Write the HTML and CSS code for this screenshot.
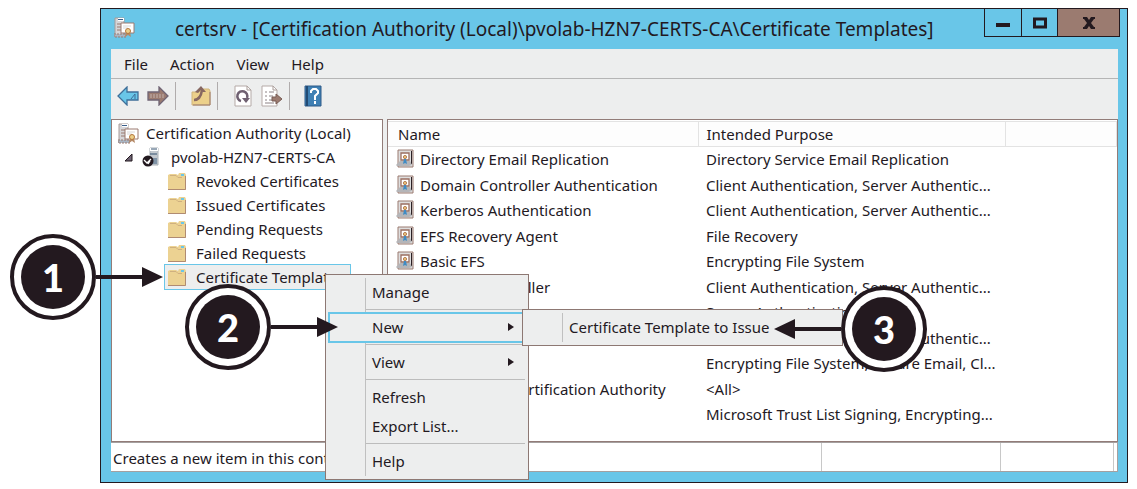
FILE: index.html
```
<!DOCTYPE html>
<html lang="en">
<head>
<meta charset="utf-8">
<title>certsrv</title>
<link rel="stylesheet" href="styles.css">
</head>
<body>
<svg width="0" height="0" class="defs" aria-hidden="true">
  <symbol id="ca" viewBox="0 0 21 21">
    <path d="M1 1h9v17H1z" fill="#d5d5d8" stroke="#a79c9a"/>
    <path d="M4 1h6v3H4z" fill="#fff"/>
    <path d="M4 2h5v1H4z" fill="#3a5f8c"/>
    <path d="M3 7h5M3 10h4M3 13h4" stroke="#9b7b70"/>
    <path d="M0 17h12v3H0z" fill="#a9b6c4" stroke="#9b7b70" stroke-dasharray="2 1"/>
    <path d="M7 6h13v10H7z" fill="#fff" stroke="#9b7b70"/>
    <path d="M9 9h8M9 11h5" stroke="#d8d8d8"/>
    <path d="M12 15l-1 5 3-2 3 2-1-5z" fill="#b58a68"/>
    <circle cx="14" cy="14" r="2.500" fill="#ecd08a" stroke="#b5763c"/>
  </symbol>
  <symbol id="server" viewBox="0 0 18 20">
    <path d="M8 1h8v17H8z" fill="#c3c9cf" stroke="#a9b0b6"/>
    <path d="M8 1h8v3H8z" fill="#fff"/>
    <path d="M9 2h6M8 7h7" stroke="#33506e"/>
    <path d="M10 11h5v6h-5z" fill="#7f93a6"/>
    <circle cx="6" cy="14" r="5.500" fill="#23191f"/>
    <path d="M2 13l3 3 4-4M6 17l2-3" fill="none" stroke="#fff" stroke-width="1.300"/>
  </symbol>
  <symbol id="folder" viewBox="0 0 20 19">
    <path d="M1 3l2-1h6l2 1 1-2h6l1 2v15H1z" fill="#ecd292"/>
    <path d="M3 3.500h6l2 2h4" fill="none" stroke="#cfb07f"/>
    <path d="M14 2h3v2h-3z" fill="#6ac6e8"/>
    <path d="M1 17.500h17.500V4" fill="none" stroke="#b08b72"/>
  </symbol>
  <symbol id="cert" viewBox="0 0 18 19">
    <path d="M2 1h15v17H2z" fill="#dedede" stroke="#9b7b70"/>
    <path d="M5 4h8v7H5z" fill="#fff" stroke="#9b6f62" stroke-width="1.300"/>
    <path d="M15.500 2v13" stroke="#2b2025"/>
    <path d="M0 16l4-4h10l2 4-3 1H1z" fill="#b5b5b8"/>
    <path d="M8 10l-1 5 2-1 2 1-1-5z" fill="#3f8bc4"/>
    <circle cx="9" cy="8" r="1.600" fill="#ecc77c" stroke="#a4643c" stroke-width=".8"/>
  </symbol>
</svg>

<main class="window">
  <header class="titlebar">
    <svg class="app-icon"><use href="#ca"/></svg>
    <h1 class="title">certsrv - [Certification Authority (Local)\pvolab-HZN7-CERTS-CA\Certificate Templates]</h1>
    <div class="controls">
      <button class="control minimize" aria-label="Minimize"><svg width="14" height="14"><path d="M0 9h14" stroke="#23191f" stroke-width="4"/></svg></button>
      <button class="control maximize" aria-label="Maximize"><svg width="14" height="14"><path d="M1.500 3h11v8h-11z" fill="none" stroke="#23191f" stroke-width="3"/></svg></button>
      <button class="control close" aria-label="Close"><svg width="14" height="14"><path d="M1 1h4l2 3 2-3h4v2h-1l-3 4 3 4h1v2H9L7 10l-2 3H1v-2h1l3-4-3-4H1z" fill="#23191f"/></svg></button>
    </div>
  </header>
  <div class="client">
    <nav class="menubar">
      <button>File</button><button>Action</button><button>View</button><button>Help</button>
    </nav>
    <div class="toolbar">
      <button aria-label="Back"><svg width="22" height="20" viewBox="0 0 22 20"><path d="M1 10l9-9v5h11v8H10v5z" fill="#69c6e8" stroke="#3f6f99" stroke-width="1.300"/><path d="M14 13l4-5v5" stroke="#3f6f99" fill="none"/></svg></button>
      <button aria-label="Forward"><svg width="22" height="20" viewBox="0 0 22 20"><path d="M21 10l-9-9v5H1v8h11v5z" fill="#9b7b70" stroke="#6f6474" stroke-width="1.300"/><path d="M3 9h14M3 11h14" stroke="#c3b3ad" stroke-dasharray="2 1"/></svg></button>
      <span class="divider"></span>
      <button class="up" aria-label="Up one level"><svg width="20" height="20" viewBox="0 0 20 20"><path d="M1 6h5l2-3h10l1 2v14H1z" fill="#ecd08a" stroke="#d0b47c"/><path d="M19 6v13H2" fill="none" stroke="#9b7b70"/><path d="M3 14c4 0 7-3 8-10" fill="none" stroke="#876861" stroke-width="2.500"/><path d="M4 6l6-6 5 6h-3l-2-2-3 3z" fill="#876861"/></svg></button>
      <span class="divider"></span>
      <button class="refresh" aria-label="Refresh"><svg width="20" height="22" viewBox="0 0 20 22"><path d="M2 1h12l4 4v16H2z" fill="#fff" stroke="#b5aaa7"/><path d="M14 1v4h4" fill="none" stroke="#a99c98"/><path d="M8 16a5 5 0 1 1 6-3" fill="none" stroke="#6f6071" stroke-width="2.500"/><path d="M9 13h8l-4 5z" fill="#6f6071"/></svg></button>
      <button aria-label="Export list"><svg width="22" height="22" viewBox="0 0 22 22"><path d="M1 1h11l4 4v16H1z" fill="#fff" stroke="#b5aaa7"/><path d="M12 1v4h4" fill="none" stroke="#a99c98"/><path d="M4 7h2m2 0h5M4 11h2m2 0h4M4 15h2m2 0h5M4 18h9" stroke="#8c8285"/><path d="M11 12h4V9l6 5-6 5v-3h-4z" fill="#9b7b70" stroke="#795d55"/></svg></button>
      <span class="divider"></span>
      <button class="help" aria-label="Help"><svg width="18" height="22" viewBox="0 0 18 22"><path d="M1 1h16v20H1z" fill="#3f80b4" stroke="#2f5b88"/><path d="M3 1v20" stroke="#234b74" stroke-width="2"/><path d="M7 8V6l2-2h3l2 2v2l-3 3v4M11 16v3" fill="none" stroke="#fff" stroke-width="2"/></svg></button>
    </div>
    <div class="panes">
      <ul class="tree">
        <li class="root"><svg class="ca-icon"><use href="#ca"/></svg>Certification Authority (Local)</li>
        <li class="host"><svg class="expander" width="10" height="10"><path d="M1 9L8 2v7z" fill="#6f6474" stroke="#23191f"/></svg><svg class="server-icon"><use href="#server"/></svg>pvolab-HZN7-CERTS-CA</li>
        <li class="leaf"><svg class="folder"><use href="#folder"/></svg>Revoked Certificates</li>
        <li class="leaf"><svg class="folder"><use href="#folder"/></svg>Issued Certificates</li>
        <li class="leaf"><svg class="folder"><use href="#folder"/></svg>Pending Requests</li>
        <li class="leaf"><svg class="folder"><use href="#folder"/></svg>Failed Requests</li>
        <li class="leaf selected"><svg class="folder"><use href="#folder"/></svg>Certificate Templates</li>
      </ul>
      <div class="list">
        <table>
          <thead><tr><th class="name">Name</th><th class="purpose">Intended Purpose</th><th></th></tr></thead>
          <tbody>
            <tr><td><svg class="cert"><use href="#cert"/></svg>Directory Email Replication</td><td>Directory Service Email Replication</td><td></td></tr>
            <tr><td><svg class="cert"><use href="#cert"/></svg>Domain Controller Authentication</td><td>Client Authentication, Server Authentic...</td><td></td></tr>
            <tr><td><svg class="cert"><use href="#cert"/></svg>Kerberos Authentication</td><td>Client Authentication, Server Authentic...</td><td></td></tr>
            <tr><td><svg class="cert"><use href="#cert"/></svg>EFS Recovery Agent</td><td>File Recovery</td><td></td></tr>
            <tr><td><svg class="cert"><use href="#cert"/></svg>Basic EFS</td><td>Encrypting File System</td><td></td></tr>
            <tr><td><svg class="cert"><use href="#cert"/></svg>Domain Controller</td><td>Client Authentication, Server Authentic...</td><td></td></tr>
            <tr><td><svg class="cert"><use href="#cert"/></svg>Web Server</td><td>Server Authentication</td><td></td></tr>
            <tr><td><svg class="cert"><use href="#cert"/></svg>Computer</td><td>Client Authentication, Server Authentic...</td><td></td></tr>
            <tr><td><svg class="cert"><use href="#cert"/></svg>User</td><td>Encrypting File System, Secure Email, Cl...</td><td></td></tr>
            <tr><td><svg class="cert"><use href="#cert"/></svg>Subordinate Certification Authority</td><td>&lt;All&gt;</td><td></td></tr>
            <tr><td><svg class="cert"><use href="#cert"/></svg>Administrator</td><td>Microsoft Trust List Signing, Encrypting...</td><td></td></tr>
          </tbody>
        </table>
      </div>
    </div>
    <footer class="status">
      <span class="message">Creates a new item in this container.</span>
      <span class="cell wide"></span>
      <span class="cell"></span>
    </footer>
  </div>
</main>

<div class="menu context">
  <button>Manage</button>
  <hr>
  <button class="active">New<svg class="more" width="6" height="8"><path d="M0 0l6 4-6 4z" fill="#23191f"/></svg></button>
  <hr>
  <button>View<svg class="more" width="6" height="8"><path d="M0 0l6 4-6 4z" fill="#23191f"/></svg></button>
  <hr>
  <button>Refresh</button>
  <button>Export List...</button>
  <hr>
  <button>Help</button>
</div>
<div class="menu submenu">
  <button>Certificate Template to Issue</button>
</div>

<div class="callout one"><span class="badge"><b>1</b></span><svg width="67" height="20"><path d="M0 8h46V0l21 10-21 10v-8H0z" fill="#23191f"/></svg></div>
<div class="callout two"><span class="badge"><b>2</b></span><svg width="67" height="20"><path d="M0 8h46V0l21 10-21 10v-8H0z" fill="#23191f"/></svg></div>
<div class="callout three"><svg width="67" height="20"><path d="M67 8H21V0L0 10l21 10v-8h46z" fill="#23191f"/></svg><span class="badge"><b>3</b></span></div>
</body>
</html>
```
FILE: styles.css
```
* { box-sizing: border-box; }

body {
  position: relative;
  display: flex;
  min-height: 100vh;
  margin: 0;
  padding: 8px 9px 6px 100px;
  background: #fff;
  color: #23191f;
  font: 15px/22px "Noto Sans", "Open Sans", sans-serif;
}

button {
  margin: 0;
  padding: 0;
  border: 0;
  background: none;
  color: inherit;
  font: inherit;
}

svg { flex: none; display: block; }
.defs { position: absolute; }

/* Window frame */
.window {
  flex: 1;
  display: flex;
  flex-direction: column;
  min-width: 0;
  padding: 0 9px 10px 10px;
  border: 1px solid #23191f;
  background: #69c6e8;
}

.titlebar {
  display: flex;
  align-items: flex-start;
  height: 40px;
}

.app-icon { width: 21px; height: 21px; margin: 8px 0 0 3px; }

.title {
  flex: 1;
  margin: 0;
  padding-left: 40px;
  font-size: 19px;
  font-weight: 400;
  line-height: 40px;
  white-space: nowrap;
}

.controls {
  display: flex;
  margin-right: -2px;
  border: 1px solid #23191f;
  border-top: 0;
}

.control {
  display: grid;
  place-items: center;
  width: 36px;
  height: 27px;
  border-left: 1px solid #23191f;
}
.control.minimize { border-left: 0; }
.control.close { width: 62px; background: #9b7b70; }

.client {
  flex: 1;
  display: flex;
  flex-direction: column;
  background: #edeeee;
}

.menubar {
  display: flex;
  gap: 22px;
  height: 30px;
  padding-left: 13px;
  border-bottom: 1px solid #b5b5b5;
}

.toolbar {
  display: flex;
  align-items: center;
  gap: 8px;
  height: 40px;
  padding: 0 6px 6px;
}

.divider { width: 1px; height: 28px; background: #b0acac; }
.toolbar .divider { margin-left: -2px; }
.toolbar .up { margin: 0 0 0 7px; }
.toolbar .refresh { margin-left: 7px; }
.toolbar .help { margin-left: 6px; }

.panes {
  flex: 1;
  display: flex;
  gap: 4px;
}

.tree, .list {
  border: 1px solid #927c78;
  background: #fff;
}

.tree {
  width: 272px;
  margin: 0;
  padding: 1px 0 0;
  list-style: none;
  white-space: nowrap;
}
.tree li { display: flex; align-items: center; height: 24px; }
.root { gap: 7px; padding-left: 6px; }
.host { padding-left: 12px; }
.leaf { gap: 9px; padding-left: 2px; margin: 0 32px 0 53px; }
.selected { overflow: hidden; background: #edeeee; outline: 1px solid #69c6e8; }
.ca-icon { width: 21px; height: 21px; }
.server-icon { width: 18px; height: 20px; margin: 0 11px 0 8px; }
.folder { width: 20px; height: 19px; }

.list { flex: 1; min-width: 0; padding-top: 1px; }

table {
  width: 100%;
  border-collapse: collapse;
  table-layout: fixed;
  white-space: nowrap;
}
th {
  height: 25px;
  padding: 0 0 0 8px;
  border: solid #e3e3e3;
  border-width: 1px 1px 1px 0;
  background: #fdfdfd;
  font-weight: 400;
  text-align: left;
}
th:first-child { padding-left: 10px; }
.name { width: 310px; }
.purpose { width: 307px; }
td { height: 25px; padding: 0 0 0 8px; }
tr:nth-child(even) td { height: 26px; }
.cert { display: inline-block; width: 18px; height: 19px; margin-right: 6px; vertical-align: -3px; }

.status {
  display: flex;
  align-items: center;
  height: 30px;
  padding-right: 3px;
  border: 1px solid #a5a0a0;
  border-left: 0;
  background: #fff;
}
.message { flex: 1; padding: 2px 0 0 2px; }
.cell { width: 114px; height: 28px; border: 0 solid #c8c8c8; border-left-width: 1px; }
.cell.wide { width: 179px; }
.cell:last-child { border-right-width: 1px; }

/* Popup menus */
.menu {
  position: absolute;
  padding: 3px;
  border: 1px solid #8d7873;
  background: linear-gradient(90deg, transparent 36px, #c0c0c0 36px, #c0c0c0 37px, transparent 37px) content-box, #edeeee;
}
.menu button {
  display: flex;
  align-items: center;
  justify-content: space-between;
  width: 100%;
  height: 29px;
  padding: 0 11px 1px 43px;
  white-space: nowrap;
}
.menu hr {
  height: 1px;
  margin: 2px 0 3px 37px;
  border: 0;
  background: #bcbcbc;
}
.menu .active { background: #edeeee; outline: 2px solid #69c6e8; outline-offset: -1px; }
.context { top: 274px; left: 325px; width: 204px; }
.submenu { top: 309px; left: 522px; width: 321px; }

/* Numbered step markers */
.callout { position: absolute; display: flex; align-items: center; }
.badge {
  display: grid;
  width: 86px;
  height: 86px;
  padding: 7px;
  border: 4px solid #23191f;
  border-radius: 50%;
  background: #fff;
}
.badge b {
  display: grid;
  place-items: center;
  border-radius: 50%;
  background: #23191f;
  color: #fff;
  font-family: Lato, "Open Sans", sans-serif;
  font-size: 38px;
  font-weight: 900;
}
.one { top: 234px; left: 10px; }
.two { top: 284px; left: 185px; }
.three { top: 286px; left: 774px; }
```
